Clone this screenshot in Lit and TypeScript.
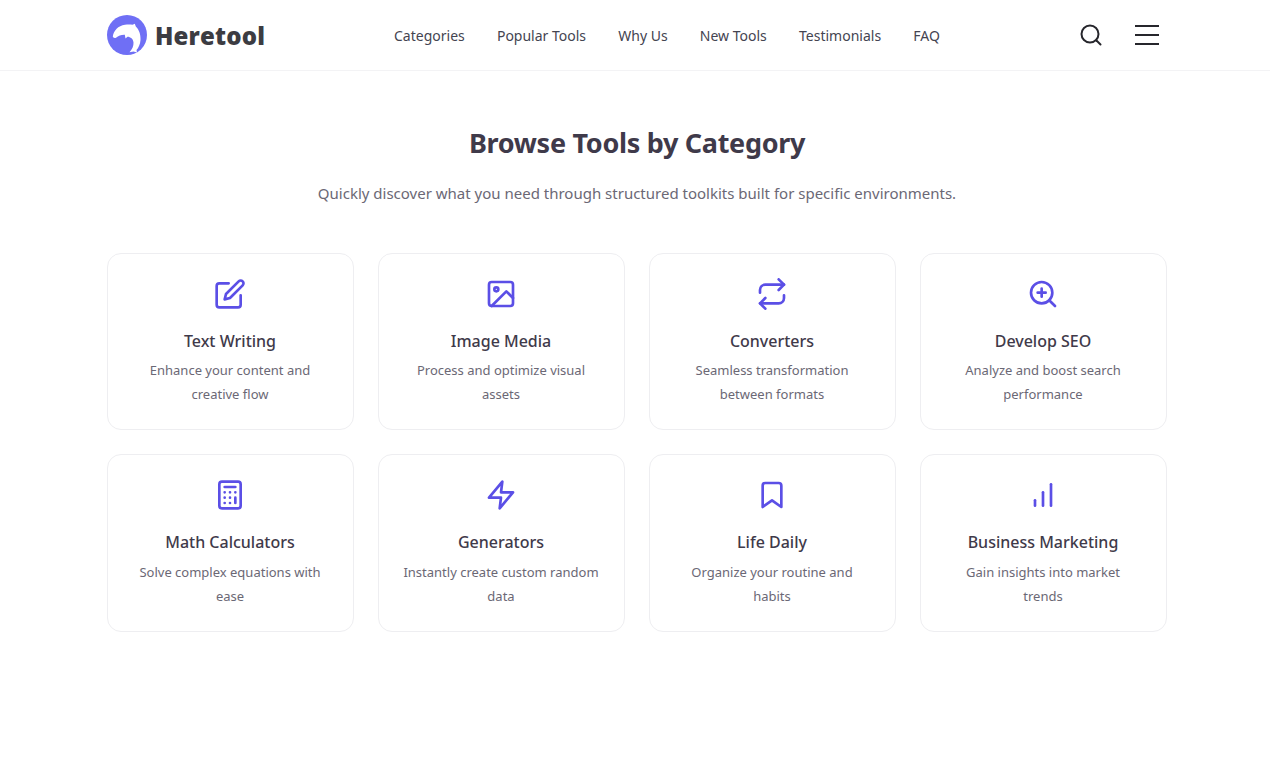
import { LitElement, html, css, svg } from "lit";
import { customElement } from "lit/decorators.js";

const icons: Record<string, unknown> = {
  edit: svg`<path d="M11 4H4a2 2 0 0 0-2 2v14a2 2 0 0 0 2 2h14a2 2 0 0 0 2-2v-7"/><path d="M18.5 2.5a2.12 2.12 0 0 1 3 3L12 15l-4 1 1-4 9.5-9.5z"/>`,
  image: svg`<rect x="3" y="3" width="18" height="18" rx="2"/><circle cx="8.5" cy="8.5" r="1.5"/><path d="M21 15l-5-5L5 21"/>`,
  repeat: svg`<path d="M17 1l4 4-4 4"/><path d="M3 11V9a4 4 0 0 1 4-4h14"/><path d="M7 23l-4-4 4-4"/><path d="M21 13v2a4 4 0 0 1-4 4H3"/>`,
  zoom: svg`<circle cx="11" cy="11" r="8"/><path d="M21 21l-4.35-4.35"/><path d="M11 8v6"/><path d="M8 11h6"/>`,
  calc: svg`<rect x="4" y="2" width="16" height="20" rx="2"/><path d="M8 6h8"/><path d="M16 14v4"/><path d="M8 10h.01M12 10h.01M16 10h.01M8 14h.01M12 14h.01M8 18h.01M12 18h.01"/>`,
  zap: svg`<path d="M13 2L3 14h9l-1 8 10-12h-9l1-8z"/>`,
  bookmark: svg`<path d="M19 21l-7-5-7 5V5a2 2 0 0 1 2-2h10a2 2 0 0 1 2 2z"/>`,
  bars: svg`<path d="M18 20V4"/><path d="M12 20V10"/><path d="M6 20v-4"/>`,
};

const cards = [
  ["edit", "Text Writing", "Enhance your content and creative flow"],
  ["image", "Image Media", "Process and optimize visual assets"],
  ["repeat", "Converters", "Seamless transformation between formats"],
  ["zoom", "Develop SEO", "Analyze and boost search performance"],
  ["calc", "Math Calculators", "Solve complex equations with ease"],
  ["zap", "Generators", "Instantly create custom random data"],
  ["bookmark", "Life Daily", "Organize your routine and habits"],
  ["bars", "Business Marketing", "Gain insights into market trends"],
];

const links = ["Categories", "Popular Tools", "Why Us", "New Tools", "Testimonials", "FAQ"];

@customElement("app-root")
export class AppRoot extends LitElement {
  static styles = css`
    :host {
      display: block;
      min-height: 760px;
      background: #fff;
      font-family: "Noto Sans", "Open Sans", sans-serif;
      color: #3f3a4a;
    }
    .header {
      height: 70px;
      border-bottom: 1px solid #f3f3f5;
      display: flex;
      align-items: center;
      padding: 0 111px 0 107px;
    }
    .brand {
      display: flex;
      align-items: center;
      gap: 8px;
      width: 287px;
    }
    .brand svg { display: block; }
    .brand span {
      font-family: "Open Sans", sans-serif;
      font-weight: 800;
      font-size: 24px;
      letter-spacing: 0.2px;
      color: #3c3c42;
    }
    .nav {
      display: flex;
      gap: 32.2px;
      font-size: 14px;
      color: #444451;
    }
    .actions {
      margin-left: auto;
      display: flex;
      align-items: center;
      gap: 32px;
    }
    .actions svg { display: block; }
    main {
      padding: 51px 103px 0 107px;
    }
    h1 {
      margin: 0;
      text-align: center;
      font-size: 27px;
      line-height: 42px;
      font-weight: 700;
      letter-spacing: -0.3px;
      color: #3f3a4a;
    }
    .sub {
      margin: 17px 0 0;
      text-align: center;
      font-size: 15px;
      line-height: 24px;
      color: #6b6875;
    }
    .grid {
      margin-top: 48px;
      display: grid;
      grid-template-columns: repeat(4, 247px);
      gap: 24px;
    }
    .card {
      box-sizing: border-box;
      height: 177.4px;
      border: 1px solid #eeeef1;
      border-radius: 14px;
      padding: 24px 25px 0 24px;
      text-align: center;
    }
    .card svg {
      display: block;
      margin: 0 auto;
      fill: none;
      stroke: #5b4fe6;
      stroke-width: 2;
      stroke-linecap: round;
      stroke-linejoin: round;
    }
    .card h3 {
      margin: 18.8px 0 0;
      font-size: 16px;
      line-height: 24px;
      font-weight: 500;
      color: #3f3a4a;
    }
    .card p {
      margin: 5.4px auto 0;
      max-width: 195.8px;
      font-size: 13px;
      line-height: 24px;
      color: #6b6875;
    }
  `;

  render() {
    return html`
      <header class="header">
        <div class="brand">
          <svg width="40" height="40" viewBox="0 0 40 40">
            <circle cx="20" cy="20" r="20" fill="#6f6ff5"/>
            <path fill="#fff" d="M5.800 21.500C6.800 15.500 11 10.800 18 9.800C20.500 9.400 23 9.300 25.500 9.800L27.800 8.800L28.800 11.500C32 14.500 33.800 19.500 33.500 25C33.200 29.500 31.500 32.800 29.500 35L30 37.500L26.500 36.500L22.500 37.300C25 34.500 26.800 31 26.500 27.500C26.200 24 23.500 21.800 20.500 21.800L18.500 23.500L17.800 19.800C14.500 19.600 11.500 20.800 9 22.700C7.500 23.300 6 22.800 5.800 21.500Z"/>
          </svg>
          <span>Heretool</span>
        </div>
        <nav class="nav">${links.map((l) => html`<span>${l}</span>`)}</nav>
        <div class="actions">
          <svg width="24" height="24" viewBox="0 0 24 24" fill="none" stroke="#26262c" stroke-width="2" stroke-linecap="round"><circle cx="11" cy="11" r="8.500"/><path d="M17.500 17.500L21.500 21.500"/></svg>
          <svg width="24" height="24" viewBox="0 0 24 24" fill="none" stroke="#26262c" stroke-width="2"><path d="M0 3h24M0 12h24M0 21h24"/></svg>
        </div>
      </header>
      <main>
        <h1>Browse Tools by Category</h1>
        <p class="sub">Quickly discover what you need through structured toolkits built for specific environments.</p>
        <div class="grid">
          ${cards.map(
            ([i, t, d]) => html`<div class="card">
              <svg width="32" height="32" viewBox="0 0 24 24">${icons[i]}</svg>
              <h3>${t}</h3>
              <p>${d}</p>
            </div>`
          )}
        </div>
      </main>
    `;
  }
}
